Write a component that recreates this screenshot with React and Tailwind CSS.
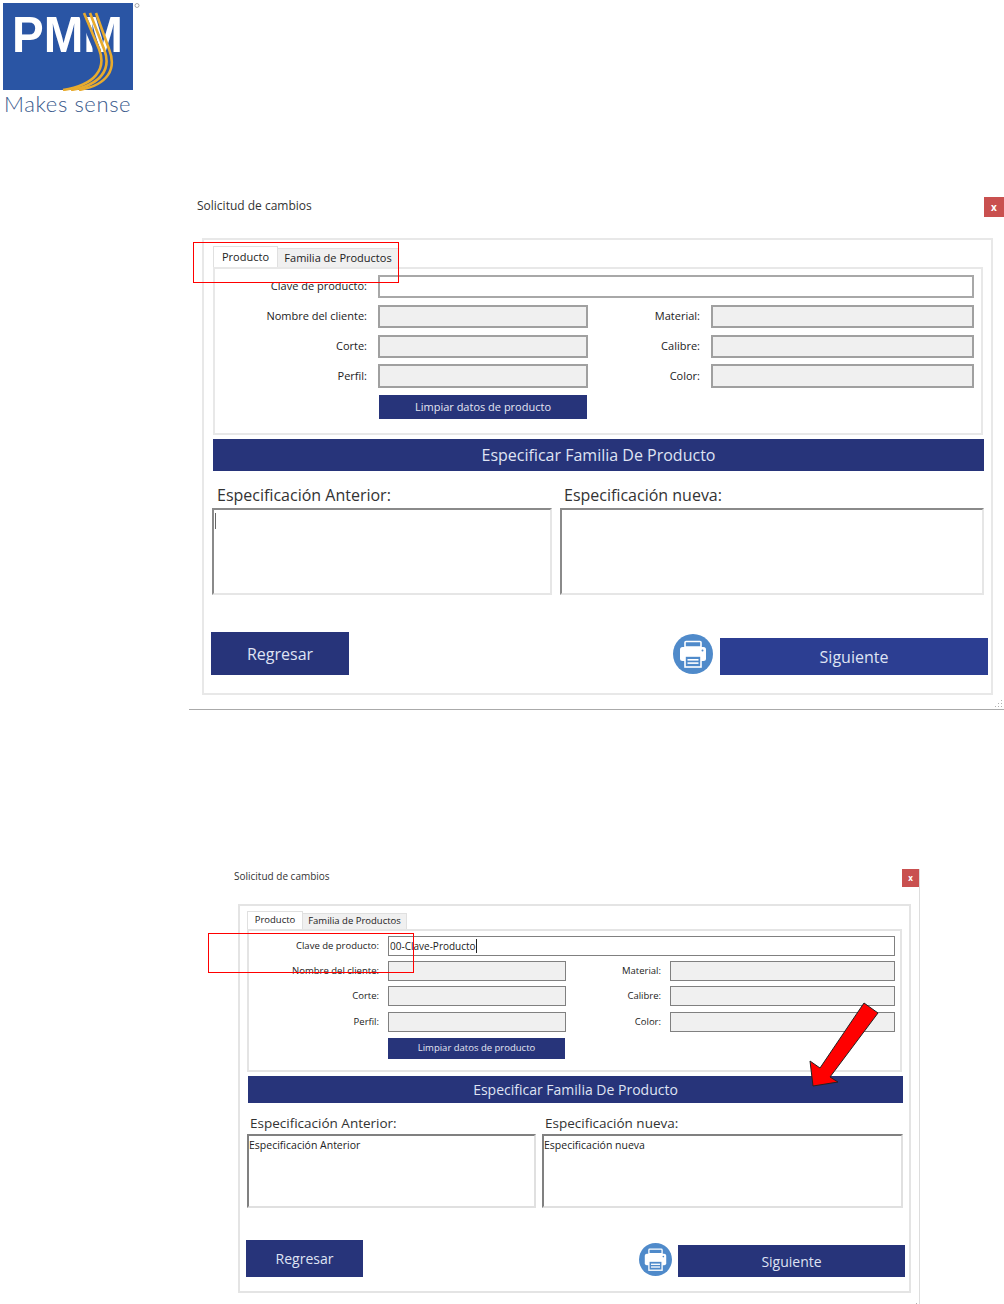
import React from 'react';

const uiFont = { fontFamily: '"Open Sans", "Noto Sans", sans-serif' };

const Logo = () => (
    <div className="relative ml-[3px] h-[112px] w-[137px]">
        <svg width="137" height="88" viewBox="0 0 137 88" className="block">
            <rect x="0" y="0" width="130" height="87" fill="#2a55a4" />
            <text x="9" y="49" fill="#fff" fontFamily="Liberation Sans" fontWeight="700" fontSize="50" textLength="111" lengthAdjust="spacingAndGlyphs">PMM</text>
            <g fill="none" stroke="#2a55a4" strokeWidth="7">
                <path d="M78 9 L95 49" />
            </g>
            <g fill="none" stroke="#e8ab2e" strokeWidth="2.6">
                <path d="M81 10 L96 46 C104 66 92 82 60 87" />
                <path d="M87 10 L101 46 C109 66 98 82 68 87" />
                <path d="M93 10 L106 46 C114 66 105 82 76 87" />
            </g>
            <circle cx="134" cy="2.5" r="2" fill="none" stroke="#888" strokeWidth="0.7" />
        </svg>
        <div className="absolute left-[1px] top-[87px] text-[22px] leading-[28px] tracking-[0.6px] text-[#3a5a8c]" style={{ fontFamily: 'Lato, sans-serif', fontWeight: 300 }}>Makes sense</div>
    </div>
);

const PrinterIcon = ({ size }) => (
    <svg width={size} height={size} viewBox="0 0 40 40" className="block">
        <circle cx="20" cy="20" r="20" fill="#4f8aca" />
        <path d="M12 13 V8.5 a1 1 0 0 1 1-1 H27 a1 1 0 0 1 1 1 V13 Z" fill="none" stroke="#fff" strokeWidth="1.6" />
        <rect x="7" y="13" width="26" height="14" rx="2.5" fill="#fff" />
        <circle cx="29.5" cy="16.5" r="1" fill="#4f8aca" />
        <rect x="12" y="22" width="16" height="11" fill="#4f8aca" stroke="#fff" strokeWidth="1.6" />
        <rect x="14.5" y="25" width="11" height="1.6" fill="#fff" />
        <rect x="14.5" y="28.3" width="11" height="1.6" fill="#fff" />
    </svg>
);

const Label = ({ className, children }) => (
    <div className={`shrink-0 text-right text-[#222] ${className}`}>{children}</div>
);

const App = () => {
    return (
        <div className="relative h-[1304px] w-[1004px] overflow-hidden bg-white pt-[3px]" style={uiFont}>
            <Logo />

            {/* first window */}
            <section className="relative ml-[189px] mt-[75px] h-[520px] w-[815px] border-b border-[#aaaaaa]">
                <div className="flex h-[48px] items-start justify-between">
                    <div className="pl-[8px] pt-[7px] text-[12px] leading-[17px] text-[#333]">Solicitud de cambios</div>
                    <div className="mt-[7px] flex h-[20px] w-[20px] items-center justify-center bg-[#c9504f] text-[10px] font-bold leading-none text-white">x</div>
                </div>
                <div className="ml-[13px] h-[457px] w-[791px] border-2 border-[#e8e8e8]">
                    <div className="ml-[9px] mt-[6px] flex h-[21px] items-end text-[11px]">
                        <div className="relative z-10 flex h-[21px] w-[65px] items-start justify-center border-x border-t border-[#e0e0e0] bg-white pt-[2px] text-[#222]">Producto</div>
                        <div className="flex h-[19px] w-[121px] items-center justify-center border-r border-t border-[#e0e0e0] bg-[#f0f0f0] text-[#222]">Familia de Productos</div>
                    </div>
                    <div className="ml-[9px] flex h-[168px] w-[770px] flex-col border-2 border-[#e8e8e8] pt-[6px] text-[11px]">
                        <div className="flex h-[23px] items-center">
                            <Label className="w-[152px]">Clave de producto:</Label>
                            <div className="ml-[11px] h-[23px] w-[596px] border-2 border-[#a8a8a8] bg-white"></div>
                        </div>
                        <div className="mt-[7px] flex h-[23px] items-center">
                            <Label className="w-[152px]">Nombre del cliente:</Label>
                            <div className="ml-[11px] h-[23px] w-[210px] border-2 border-[#a0a0a0] bg-[#f0f0f0]"></div>
                            <Label className="w-[112px]">Material:</Label>
                            <div className="ml-[11px] h-[23px] w-[263px] border-2 border-[#a0a0a0] bg-[#f0f0f0]"></div>
                        </div>
                        <div className="mt-[7px] flex h-[23px] items-center">
                            <Label className="w-[152px]">Corte:</Label>
                            <div className="ml-[11px] h-[23px] w-[210px] border-2 border-[#a0a0a0] bg-[#f0f0f0]"></div>
                            <Label className="w-[112px]">Calibre:</Label>
                            <div className="ml-[11px] h-[23px] w-[263px] border-2 border-[#a0a0a0] bg-[#f0f0f0]"></div>
                        </div>
                        <div className="mt-[6px] flex h-[24px] items-center">
                            <Label className="w-[152px]">Perfil:</Label>
                            <div className="ml-[11px] h-[24px] w-[210px] border-2 border-[#a0a0a0] bg-[#f0f0f0]"></div>
                            <Label className="w-[112px]">Color:</Label>
                            <div className="ml-[11px] h-[24px] w-[263px] border-2 border-[#a0a0a0] bg-[#f0f0f0]"></div>
                        </div>
                        <div className="ml-[164px] mt-[7px] flex h-[24px] w-[208px] items-center justify-center bg-[#27347a] text-[#e4e6f2]">Limpiar datos de producto</div>
                    </div>
                    <div className="ml-[9px] mt-[4px] flex h-[32px] w-[771px] items-center justify-center bg-[#27347a] text-[16px] text-[#dfe3f3]">Especificar Familia De Producto</div>
                    <div className="flex h-[37px] items-end pb-[2px] text-[16px] leading-[22px] text-[#333]">
                        <div className="ml-[13px] w-[347px]">Especificación Anterior:</div>
                        <div>Especificación nueva:</div>
                    </div>
                    <div className="ml-[8px] flex gap-[8px]">
                        <div className="h-[87px] w-[340px] border-2 border-b-[#e6e6e6] border-l-[#8a8a8a] border-r-[#e6e6e6] border-t-[#8a8a8a] pl-[1px] pt-[3px]">
                            <div className="h-[16px] w-[1px] bg-[#666]"></div>
                        </div>
                        <div className="h-[87px] w-[424px] border-2 border-b-[#e6e6e6] border-l-[#8a8a8a] border-r-[#e6e6e6] border-t-[#8a8a8a]"></div>
                    </div>
                    <div className="ml-[7px] mt-[37px] flex items-end">
                        <div className="flex h-[43px] w-[138px] items-center justify-center bg-[#27347a] text-[16px] text-[#dfe3f3]">Regresar</div>
                        <div className="mb-[1px] ml-[324px]"><PrinterIcon size={40} /></div>
                        <div className="ml-[7px] flex h-[37px] w-[268px] items-center justify-center bg-[#2c3e92] text-[16px] text-[#dfe3f3]">Siguiente</div>
                    </div>
                </div>
                <Grip className="absolute bottom-[1px] right-[1px]" />
            </section>

            {/* second window */}
            <section className="relative ml-[230px] mt-[159px] h-[435px] w-[690px] border-r border-[#dddddd]">
                <div className="flex h-[35px] items-start justify-between">
                    <div className="pl-[4px] pt-[0px] text-[10px] leading-[14px] text-[#333]">Solicitud de cambios</div>
                    <div className="flex h-[18px] w-[17px] items-center justify-center bg-[#c9504f] text-[8px] font-bold leading-none text-white">x</div>
                </div>
                <div className="ml-[8px] h-[389px] w-[673px] border-2 border-[#e4e4e4]">
                    <div className="ml-[7px] mt-[5px] flex h-[18px] items-end text-[9.5px]">
                        <div className="relative z-10 flex h-[18px] w-[56px] items-start justify-center border-x border-t border-[#e0e0e0] bg-white pt-[1px] text-[#222]">Producto</div>
                        <div className="flex h-[16px] w-[104px] items-center justify-center border-r border-t border-[#e0e0e0] bg-[#f0f0f0] text-[#222]">Familia de Productos</div>
                    </div>
                    <div className="ml-[7px] flex h-[143px] w-[655px] flex-col border-2 border-[#e4e4e4] pt-[5px] text-[9.5px]">
                        <div className="flex h-[20px] items-center">
                            <Label className="w-[130px]">Clave de producto:</Label>
                            <div className="ml-[9px] flex h-[20px] w-[507px] items-center border border-[#808080] bg-white pl-[1px] text-[10px] text-[#222]">00-Clave-Producto<span className="h-[14px] w-px bg-[#222]"></span></div>
                        </div>
                        <div className="mt-[5px] flex h-[20px] items-center">
                            <Label className="w-[130px]">Nombre del cliente:</Label>
                            <div className="ml-[9px] h-[20px] w-[178px] border border-[#808080] bg-[#f0f0f0]"></div>
                            <Label className="w-[95px]">Material:</Label>
                            <div className="ml-[9px] h-[20px] w-[225px] border border-[#808080] bg-[#f0f0f0]"></div>
                        </div>
                        <div className="mt-[5px] flex h-[20px] items-center">
                            <Label className="w-[130px]">Corte:</Label>
                            <div className="ml-[9px] h-[20px] w-[178px] border border-[#808080] bg-[#f0f0f0]"></div>
                            <Label className="w-[95px]">Calibre:</Label>
                            <div className="ml-[9px] h-[20px] w-[225px] border border-[#808080] bg-[#f0f0f0]"></div>
                        </div>
                        <div className="mt-[6px] flex h-[20px] items-center">
                            <Label className="w-[130px]">Perfil:</Label>
                            <div className="ml-[9px] h-[20px] w-[178px] border border-[#808080] bg-[#f0f0f0]"></div>
                            <Label className="w-[95px]">Color:</Label>
                            <div className="ml-[9px] h-[20px] w-[225px] border border-[#808080] bg-[#f0f0f0]"></div>
                        </div>
                        <div className="ml-[139px] mt-[6px] flex h-[21px] w-[177px] items-center justify-center bg-[#27347a] text-[#e4e6f2]">Limpiar datos de producto</div>
                    </div>
                    <div className="ml-[8px] mt-[4px] flex h-[27px] w-[655px] items-center justify-center bg-[#27347a] text-[14px] text-[#dfe3f3]">Especificar Familia De Producto</div>
                    <div className="flex h-[31px] items-end pb-[1px] text-[13.5px] leading-[20px] text-[#333]">
                        <div className="ml-[10px] w-[295px]">Especificación Anterior:</div>
                        <div>Especificación nueva:</div>
                    </div>
                    <div className="ml-[7px] flex gap-[6px] text-[10.5px] leading-[14px] text-[#222]">
                        <div className="h-[74px] w-[289px] border-2 border-b-[#e0e0e0] border-l-[#808080] border-r-[#e0e0e0] border-t-[#808080] pt-[2px]">Especificación Anterior</div>
                        <div className="h-[74px] w-[361px] border-2 border-b-[#e0e0e0] border-l-[#808080] border-r-[#e0e0e0] border-t-[#808080] pt-[2px]">Especificación nueva</div>
                    </div>
                    <div className="ml-[6px] mt-[32px] flex items-end">
                        <div className="flex h-[37px] w-[117px] items-center justify-center bg-[#27347a] text-[14px] text-[#dfe3f3]">Regresar</div>
                        <div className="mb-[1px] ml-[276px]"><PrinterIcon size={33} /></div>
                        <div className="ml-[6px] flex h-[32px] w-[227px] items-center justify-center bg-[#27347a] text-[14px] text-[#dfe3f3]">Siguiente</div>
                    </div>
                </div>
                <Grip className="absolute -bottom-[7px] right-[1px]" />
            </section>

            {/* annotations */}
            <div className="absolute left-[193px] top-[242px] h-[41px] w-[206px] border border-[#ff0000]"></div>
            <div className="absolute left-[208px] top-[933px] h-[40px] w-[206px] border border-[#ff0000]"></div>
            <svg className="absolute left-[800px] top-[995px]" width="90" height="100" viewBox="800 995 90 100">
                <path d="M864 1003 L878 1013 L830 1077 L838 1082 L813 1086 L810 1061 L820 1068 Z" fill="#ff0000" stroke="#222" strokeWidth="1" />
            </svg>
        </div>
    );
};

const Grip = ({ className }) => (
    <svg className={className} width="9" height="9" viewBox="0 0 9 9">
        <g fill="#b0b0b0">
            <rect x="7" y="1" width="1" height="1" />
            <rect x="4" y="4" width="1" height="1" />
            <rect x="7" y="4" width="1" height="1" />
            <rect x="1" y="7" width="1" height="1" />
            <rect x="4" y="7" width="1" height="1" />
            <rect x="7" y="7" width="1" height="1" />
        </g>
    </svg>
);

export default App;
